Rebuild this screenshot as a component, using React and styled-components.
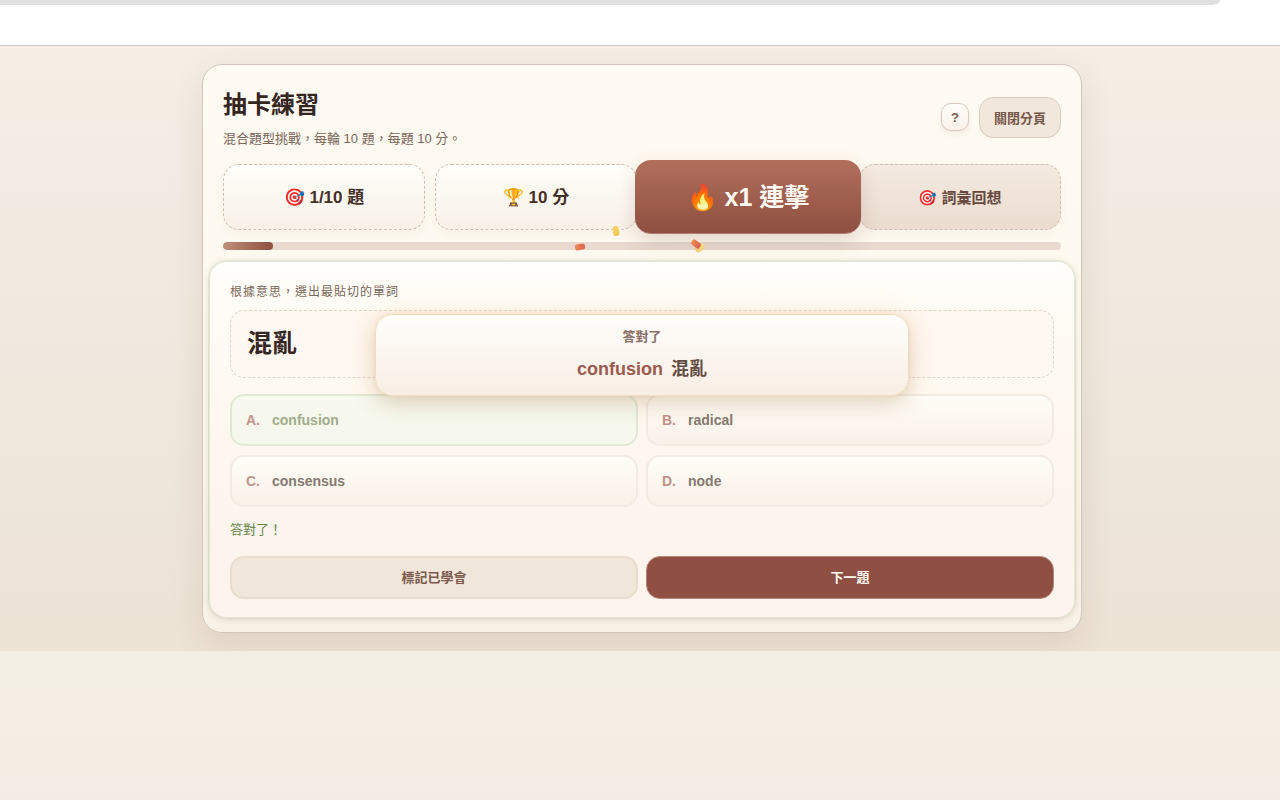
import React from "react";
import styled, { createGlobalStyle } from "styled-components";

const GlobalStyle = createGlobalStyle`
  *, *::before, *::after { box-sizing: border-box; }
  body {
    margin: 0;
    font-family: "Liberation Sans", "Noto Sans CJK TC", sans-serif;
    color: #35251f;
    background: linear-gradient(180deg, #f4efe5 0%, #f3ece4 25%, #efe7dc 65%, #ede3d5 100%);
  }
  h1, h2, p { margin: 0; }
  button { font-family: inherit; cursor: pointer; }
`;

const TopBar = styled.header`
  height: 46px;
  background: #fff;
  border-bottom: 1px solid #c8c9c3;
`;

const TopStrip = styled.div`
  height: 5px;
  margin-right: 60px;
  background: #e0e0e0;
  border-bottom-right-radius: 8px 5px;
`;

const Page = styled.main`
  padding: 18px 16px 18px 20px;
`;

const Card = styled.section`
  max-width: 880px;
  margin: 0 auto;
  padding: 20px 20px 14px;
  border: 1px solid #d3c5bb;
  border-radius: 20px;
  background: linear-gradient(180deg, #fffaf2 0%, #fef9ef 50%, #f8f1e6 100%);
  box-shadow: 0 12px 32px rgba(110, 70, 50, 0.12);
`;

const Heading = styled.div`
  display: flex;
  align-items: center;
  justify-content: space-between;
  margin-bottom: 15px;
`;

const Title = styled.h1`
  font-size: 24px;
  line-height: 40px;
  margin-bottom: 4px;
`;

const Subtitle = styled.p`
  font-size: 13px;
  line-height: 20px;
  color: #7b655a;
`;

const Tools = styled.div`
  display: flex;
  align-items: center;
  gap: 10px;
`;

const HelpButton = styled.button`
  width: 28px;
  height: 28px;
  padding: 0;
  border: 1px solid #d8c6bc;
  border-radius: 10px;
  background: linear-gradient(180deg, #fffefb, #faf1e9);
  color: #7c564a;
  font-size: 13px;
  font-weight: 700;
  box-shadow: 0 3px 6px rgba(110, 70, 50, 0.08);
`;

const CloseButton = styled.button`
  height: 41px;
  padding: 0 14px;
  border: 1px solid #dccbbf;
  border-radius: 14px;
  background: #f2e7dc;
  color: #76574a;
  font-size: 13px;
  font-weight: 700;
`;

const Stats = styled.div`
  display: grid;
  grid-template-columns: repeat(4, 1fr);
  gap: 10px;
  margin-bottom: 12px;
`;

const Stat = styled.div`
  display: flex;
  align-items: center;
  justify-content: center;
  height: 66px;
  padding-bottom: ${(p) => (p.$muted ? "2px" : "4px")};
  border: 1px dashed #d0bdb3;
  border-radius: 16px;
  background: ${(p) =>
    p.$muted
      ? "linear-gradient(180deg, #f4eae1, #ebdccf)"
      : "linear-gradient(180deg, #fffefa, #f8f1e8)"};
  color: ${(p) => (p.$muted ? "#69493f" : "#452e26")};
  font-size: ${(p) => (p.$muted ? "15px" : "17px")};
  font-weight: 700;
  white-space: pre;
  box-shadow: 0 4px 10px rgba(110, 70, 50, 0.04);
`;

const Combo = styled(Stat)`
  position: relative;
  z-index: 1;
  height: 74px;
  margin: -4px -12px;
  border: 0;
  border-bottom: 1px solid #ae7d6f;
  background: linear-gradient(180deg, #b1705c, #8f4f41);
  color: #fffaf3;
  font-size: 25px;
  box-shadow: 0 8px 20px rgba(110, 60, 45, 0.18);
`;

const Confetto = styled.i`
  position: absolute;
  left: ${(p) => p.$x}px;
  top: ${(p) => p.$y}px;
  width: 6px;
  height: 10px;
  border-radius: 2px;
  background: ${(p) => p.$paint};
  transform: rotate(${(p) => p.$turn}deg);
`;

const Track = styled.div`
  height: 8px;
  margin-bottom: 11px;
  border-radius: 4px;
  background: #e8dad0;
  overflow: hidden;
`;

const TrackFill = styled.div`
  height: 100%;
  border-radius: 4px;
  background: linear-gradient(90deg, #bf8f7b, #8f4f41);
`;

const Panel = styled.section`
  position: relative;
  margin: 0 -14px;
  padding: 20px 20px 18px;
  border: 1px solid #e6e6d8;
  border-radius: 18px;
  background: linear-gradient(180deg, #fffefa 0%, #fff9f1 35%, #fdf4ee 75%, #fdf4ee 100%);
  box-shadow: 0 0 0 1px rgba(150, 170, 120, 0.16), 0 1px 6px rgba(90, 100, 60, 0.2);
`;

const Prompt = styled.p`
  margin-bottom: 8px;
  font-size: 12px;
  line-height: 20px;
  letter-spacing: 1px;
  color: #7b655a;
`;

const Word = styled.h2`
  height: 68px;
  margin-bottom: 16px;
  padding: 0 16px;
  border: 1px dashed #e2d4ca;
  border-radius: 14px;
  background: #fff7f1;
  font-size: 25px;
  line-height: 64px;
`;

const PairGrid = styled.div`
  display: grid;
  grid-template-columns: 1fr 1fr;
  gap: 9px 8px;
`;

const Option = styled.button`
  display: flex;
  align-items: center;
  gap: 12px;
  height: 52px;
  padding: 0 14px;
  border: 2px solid ${(p) => (p.$correct ? "#e0e9d4" : "#f2ebe3")};
  border-radius: 14px;
  background: ${(p) =>
    p.$correct
      ? "linear-gradient(180deg, #f7f8ee, #f6f8ed)"
      : "linear-gradient(180deg, #fffdf8, #faf1e8)"};
  color: ${(p) => (p.$correct ? "#9fad8c" : "#857970")};
  font-size: 14px;
  font-weight: 700;
  text-align: left;
`;

const OptionKey = styled.span`
  color: #c0938a;
`;

const Feedback = styled.p`
  margin: 11px 0 14px;
  font-size: 13px;
  line-height: 24px;
  color: #64864a;
`;

const Action = styled.button`
  height: 43px;
  padding: 0 16px 2px;
  border: ${(p) => (p.$primary ? "1px solid #b5877a" : "2px solid #e9dccf")};
  border-radius: 14px;
  background: ${(p) => (p.$primary ? "#8f4f42" : "#f1e6da")};
  color: ${(p) => (p.$primary ? "#fffaf3" : "#7b5a4e")};
  font-size: 13px;
  font-weight: 700;
`;

const Toast = styled.div`
  position: absolute;
  top: 52px;
  left: 0;
  right: 0;
  max-width: 534px;
  margin: 0 auto;
  padding: 12px 20px 14px;
  border: 1px solid #efdfc2;
  border-radius: 18px;
  background: linear-gradient(180deg, #fffefb, #f9eee5);
  text-align: center;
  font-weight: 700;
  box-shadow: 0 0 2px rgba(225, 190, 120, 0.5), 0 8px 20px rgba(110, 70, 50, 0.18),
    0 0 28px rgba(245, 205, 120, 0.26);
`;

const ToastLabel = styled.p`
  margin-bottom: 10px;
  font-size: 13px;
  line-height: 20px;
  color: #8a7066;
`;

const ToastAnswer = styled.p`
  display: flex;
  justify-content: center;
  gap: 8px;
  font-size: 18px;
  line-height: 24px;
  color: #624b42;
`;

const ToastTerm = styled.span`
  color: #9d5a4e;
`;

const options = [
  { key: "A.", text: "confusion", correct: true },
  { key: "B.", text: "radical" },
  { key: "C.", text: "consensus" },
  { key: "D.", text: "node" },
];

const confetti = [
  { x: -22, y: 66, turn: -8, paint: "linear-gradient(#fbd566, #f8c150)" },
  { x: -58, y: 82, turn: 82, paint: "linear-gradient(#e2604d, #ed8a55)" },
  { x: 62, y: 83, turn: 58, paint: "linear-gradient(#f3d982, #efcc78)" },
  { x: 58, y: 79, turn: -52, paint: "linear-gradient(#ea8c50, #d95f4d)" },
];

export default function App() {
  const progress = 6;
  return (
    <>
      <GlobalStyle />
      <TopBar>
        <TopStrip />
      </TopBar>
      <Page>
        <Card>
          <Heading>
            <div>
              <Title>抽卡練習</Title>
              <Subtitle>混合題型挑戰，每輪 10 題，每題 10 分。</Subtitle>
            </div>
            <Tools>
              <HelpButton type="button">?</HelpButton>
              <CloseButton type="button">關閉分頁</CloseButton>
            </Tools>
          </Heading>
          <Stats>
            <Stat>🎯 1/10 題</Stat>
            <Stat>🏆 10 分</Stat>
            <Combo>
              🔥 x1 連擊
              {confetti.map((c) => (
                <Confetto key={c.x} $x={c.x} $y={c.y} $turn={c.turn} $paint={c.paint} />
              ))}
            </Combo>
            <Stat $muted>🎯 詞彙回想</Stat>
          </Stats>
          <Track>
            <TrackFill style={{ width: `${progress}%` }} />
          </Track>
          <Panel>
            <Prompt>根據意思，選出最貼切的單詞</Prompt>
            <Word>混亂</Word>
            <PairGrid>
              {options.map((o) => (
                <Option key={o.key} type="button" $correct={o.correct}>
                  <OptionKey>{o.key}</OptionKey>
                  {o.text}
                </Option>
              ))}
            </PairGrid>
            <Feedback>答對了！</Feedback>
            <PairGrid>
              <Action type="button">標記已學會</Action>
              <Action type="button" $primary>
                下一題
              </Action>
            </PairGrid>
            <Toast role="status">
              <ToastLabel>答對了</ToastLabel>
              <ToastAnswer>
                <ToastTerm>confusion</ToastTerm>
                <span>混亂</span>
              </ToastAnswer>
            </Toast>
          </Panel>
        </Card>
      </Page>
    </>
  );
}
